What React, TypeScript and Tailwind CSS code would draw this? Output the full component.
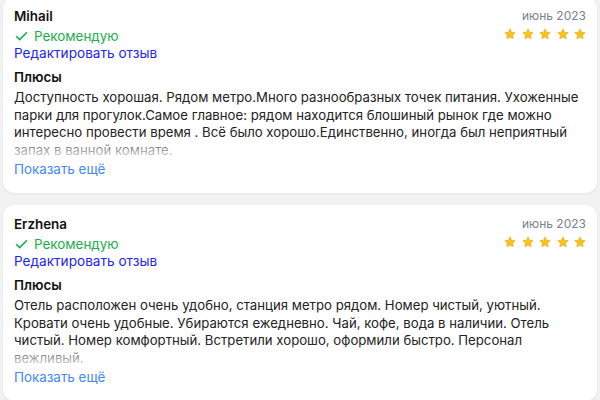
import { Check } from "lucide-react";

type Review = {
	name: string;
	date: string;
	text: string;
};

const reviews: Review[] = [
	{
		name: "Mihail",
		date: "июнь 2023",
		text: "Доступность хорошая. Рядом метро.Много разнообразных точек питания. Ухоженные парки для прогулок.Самое главное: рядом находится блошиный рынок где можно интересно провести время . Всё было хорошо.Единственно, иногда был неприятный запах в ванной комнате.",
	},
	{
		name: "Erzhena",
		date: "июнь 2023",
		text: "Отель расположен очень удобно, станция метро рядом. Номер чистый, уютный. Кровати очень удобные. Убираются ежедневно. Чай, кофе, вода в наличии. Отель чистый. Номер комфортный. Встретили хорошо, оформили быстро. Персонал вежливый.",
	},
];

function Star() {
	return (
		<svg width="12" height="12" viewBox="0 0 24 24" aria-hidden="true">
			<path
				d="M12 1.8l3.1 6.6 7.2.9-5.3 5 1.4 7.1L12 17.9l-6.4 3.5 1.4-7.1-5.3-5 7.2-.9z"
				fill="#fcc21b"
				stroke="#e3a500"
				strokeWidth="1.2"
				strokeLinejoin="round"
			/>
		</svg>
	);
}

function ReviewCard({ review }: { review: Review }) {
	return (
		<div className="rounded-[12px] bg-white px-[11px] pt-[9px] pb-[15px] shadow-[0_1px_3px_rgba(0,0,0,0.06)]">
			{/* Header */}
			<div className="flex items-start justify-between">
				<div>
					<div className="font-semibold text-[13.4px] text-[#111] leading-[20px]">
						{review.name}
					</div>
					<div className="mt-[1px] flex items-center gap-[5px] text-[13.4px] text-[#1aad48] leading-[18px]">
						<Check size={15} strokeWidth={2.5} />
						<span>Рекомендую</span>
					</div>
					<div className="text-[13.6px] text-[#2424f0] leading-[16px]">
						Редактировать отзыв
					</div>
				</div>
				<div className="flex flex-col items-end">
					<div className="text-[12px] text-[#7b808a] leading-[20px]">
						{review.date}
					</div>
					<div className="mt-[2px] flex gap-[5.5px]">
						<Star />
						<Star />
						<Star />
						<Star />
						<Star />
					</div>
				</div>
			</div>

			{/* Pros */}
			<div className="mt-[6px] font-semibold text-[13.4px] text-[#111] leading-[20px]">
				Плюсы
			</div>
			<div className="relative mt-[2px] h-[70px] overflow-hidden text-[13.2px] text-[#222] leading-[17.5px]">
				{review.text}
				<div className="absolute right-0 bottom-0 left-0 h-[24px] bg-gradient-to-b from-white/0 to-white/90" />
			</div>
			<div className="mt-[1px] text-[13.4px] text-[#3f87f5] leading-[18px]">
				Показать ещё
			</div>
		</div>
	);
}

export default function App() {
	return (
		<div className="h-[400px] overflow-hidden bg-[#f2f2f2] px-[3px] font-['Inter',sans-serif]">
			<div className="-mt-[3px] flex flex-col gap-[12px]">
				{reviews.map((r) => (
					<ReviewCard key={r.name} review={r} />
				))}
			</div>
		</div>
	);
}
